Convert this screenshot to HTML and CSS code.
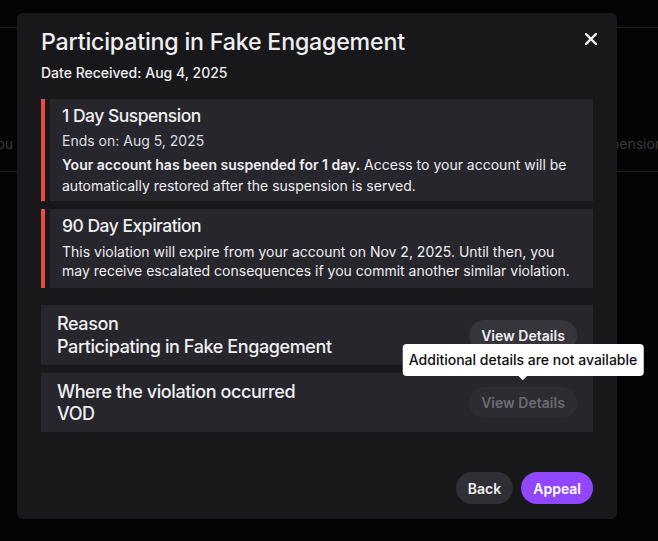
FILE: index.html
```html
<!DOCTYPE html>
<html lang="en">
<head>
<meta charset="utf-8">
<title>Participating in Fake Engagement</title>
<link rel="stylesheet" href="styles.css">
</head>
<body>
<div class="page">
  <div class="page-top"></div>
  <div class="page-row">
    <span class="bg-left">You</span>
    <span class="bg-right">Suspension</span>
  </div>
</div>

<div class="modal" role="dialog">
  <header class="modal-head">
    <h1 class="modal-title">Participating in Fake Engagement</h1>
    <button class="close" aria-label="Close">
      <svg width="12" height="12" viewBox="0 0 12 12"><path d="M1 1L11 11M11 1L1 11" stroke="#efeff1" stroke-width="2.4" stroke-linecap="square"/></svg>
    </button>
  </header>
  <p class="date">Date Received: Aug 4, 2025</p>

  <div class="notice notice-first">
    <div class="notice-bar"></div>
    <div class="notice-body">
      <h2 class="notice-title">1 Day Suspension</h2>
      <p class="notice-sub">Ends on: Aug 5, 2025</p>
      <p class="notice-text"><strong>Your account has been suspended for 1 day.</strong> Access to your account will be automatically restored after the suspension is served.</p>
    </div>
  </div>

  <div class="notice notice-second">
    <div class="notice-bar"></div>
    <div class="notice-body">
      <h2 class="notice-title">90 Day Expiration</h2>
      <p class="notice-text2">This violation will expire from your account on Nov 2, 2025. Until then, you may receive escalated consequences if you commit another similar violation.</p>
    </div>
  </div>

  <div class="rows">
    <div class="row">
      <div class="row-text">
        <div>Reason</div>
        <div>Participating in Fake Engagement</div>
      </div>
      <button class="details">View Details</button>
    </div>
    <div class="row row-second">
      <div class="row-text">
        <div>Where the violation occurred</div>
        <div>VOD</div>
      </div>
      <div class="details-wrap">
        <button class="details details-disabled">View Details</button>
        <div class="tooltip">Additional details are not available</div>
      </div>
    </div>
  </div>

  <footer class="modal-foot">
    <button class="btn btn-back">Back</button>
    <button class="btn btn-appeal">Appeal</button>
  </footer>
</div>
</body>
</html>
```

FILE: styles.css
```css
* { box-sizing: border-box; }
html, body {
  margin: 0;
  padding: 0;
  width: 658px;
  height: 541px;
  overflow: hidden;
  background: #040405;
  font-family: Inter, "Noto Sans", "Liberation Sans", sans-serif;
  color: #efeff1;
}
.page {
  width: 658px;
  height: 541px;
}
.page-top {
  height: 28px;
  border-bottom: 1px solid #221c1d;
}
.page-row {
  height: 144px;
  border-bottom: 1px solid #221c1d;
  position: relative;
  color: #3a3a3d;
  font-size: 14px;
}
.bg-left {
  position: absolute;
  left: -12px;
  top: 107px;
}
.bg-right {
  position: absolute;
  left: 586px;
  top: 107px;
  white-space: nowrap;
}

.modal {
  position: absolute;
  left: 17px;
  top: 13px;
  width: 600px;
  height: 506px;
  background: #18181b;
  border-radius: 6px;
  padding: 14px 24px 15px 24px;
  display: flex;
  flex-direction: column;
}
.modal-head {
  display: flex;
  justify-content: space-between;
  align-items: flex-start;
}
.modal-title {
  margin: 0;
  font-size: 23.2px;
  line-height: 30px;
  font-weight: 500;
  letter-spacing: -0.2px;
  color: #efeff1;
}
.close {
  background: none;
  border: 0;
  padding: 0;
  margin: 6px -4px 0 0;
  width: 12px;
  height: 12px;
  display: flex;
}
.date {
  margin: 6px 0 0 0;
  font-size: 14px;
  line-height: 20px;
  font-weight: 500;
  color: #efeff1;
}

.notice {
  display: flex;
  gap: 5px;
}
.notice-first { margin-top: 16px; }
.notice-second { margin-top: 8px; }
.notice-bar {
  width: 4px;
  background: #eb4a4a;
  flex: none;
}
.notice-body {
  flex: 1;
  background: #26262c;
  padding: 6px 12px 5px 12px;
}
.notice-second .notice-body { padding-bottom: 8px; }
.notice-title {
  margin: 0;
  font-size: 17.5px;
  line-height: 22px;
  font-weight: 500;
  letter-spacing: -0.5px;
}
.notice-sub {
  margin: 4px 0 0 0;
  font-size: 14px;
  line-height: 20px;
  color: #dedee3;
}
.notice-text {
  margin: 3px 0 0 0;
  font-size: 14px;
  line-height: 21px;
  color: #efeff1;
}
.notice-text strong { font-weight: 600; }
.notice-text2 {
  margin: 5px 0 0 0;
  font-size: 14px;
  line-height: 19px;
  color: #efeff1;
}

.rows {
  margin-top: 17px;
  display: flex;
  flex-direction: column;
  gap: 8px;
}
.row {
  background: #26262c;
  padding: 7px 16px;
  display: flex;
  justify-content: space-between;
  align-items: center;
}
.row-text {
  font-size: 18px;
  line-height: 23px;
  font-weight: 500;
  letter-spacing: -0.4px;
}
.row-second { padding: 7.5px 16px; }
.row-second .row-text { line-height: 22px; }
.details {
  height: 31px;
  padding: 0;
  border-radius: 16px;
  border: 0;
  background: #35353b;
  color: #efeff1;
  font-family: inherit;
  font-size: 14px;
  font-weight: 600;
  width: 108px;
}
.details-disabled {
  background: #2c2c32;
  color: #6b6b72;
}
.details-wrap {
  position: relative;
  display: flex;
}
.tooltip {
  position: absolute;
  bottom: 42px;
  left: 54px;
  transform: translateX(-50%);
  white-space: nowrap;
  background: #ffffff;
  color: #0e0e10;
  font-size: 14px;
  font-weight: 500;
  line-height: 20px;
  padding: 6px 6px;
  border-radius: 4px;
}
.tooltip::after {
  content: "";
  position: absolute;
  left: 50%;
  bottom: -3px;
  width: 6px;
  height: 6px;
  background: #ffffff;
  transform: translateX(-50%) rotate(45deg);
}

.modal-foot {
  margin-top: auto;
  display: flex;
  justify-content: flex-end;
  gap: 8px;
}
.btn {
  height: 32px;
  border: 0;
  border-radius: 16px;
  padding: 0 12px;
  font-family: inherit;
  font-size: 14px;
  font-weight: 600;
  color: #efeff1;
}
.btn-back { background: #2f2f35; }
.btn-appeal { background: #9147ff; color: #ffffff; }
```
